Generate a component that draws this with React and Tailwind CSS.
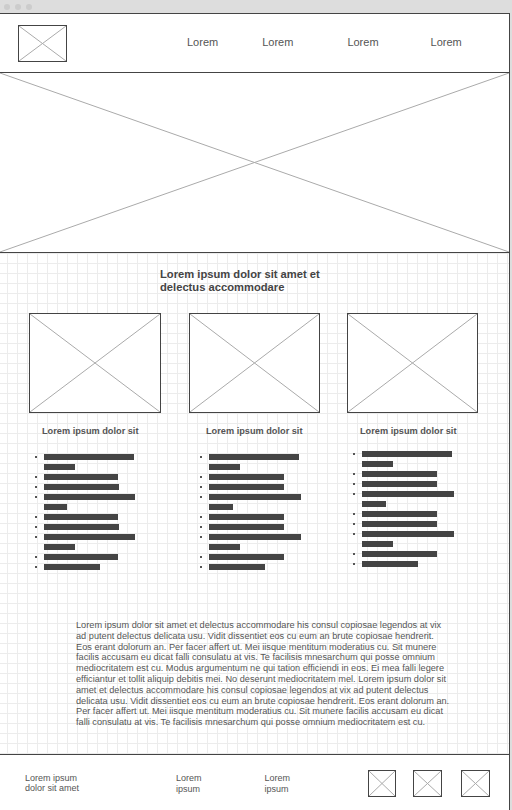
import React from 'react';

const font = { fontFamily: '"Liberation Sans", Arial, sans-serif' };

const XMark = () => (
  <svg className="block w-full h-full" viewBox="0 0 100 100" preserveAspectRatio="none">
    <line x1="0" y1="0" x2="100" y2="100" stroke="#aaaaaa" strokeWidth="1" vectorEffect="non-scaling-stroke" />
    <line x1="100" y1="0" x2="0" y2="100" stroke="#aaaaaa" strokeWidth="1" vectorEffect="non-scaling-stroke" />
  </svg>
);

const Placeholder = ({ className }) => (
  <div className={`border border-[#444444] bg-white shrink-0 ${className}`}>
    <XMark />
  </div>
);

const columns = [
  {
    width: 'w-[132px]',
    title: 'pl-[13px]',
    list: 'pl-[6px] mt-[15px]',
    items: [[90, 31], [74], [75], [91, 23], [74], [75], [91, 31], [74], [56]],
  },
  {
    width: 'w-[131px] ml-[28px]',
    title: 'pl-[17px]',
    list: 'pl-[11px] mt-[15px]',
    items: [[90, 31], [75], [75], [92, 24], [75], [75], [92, 31], [75], [56]],
  },
  {
    width: 'w-[131px] ml-[27px]',
    title: 'pl-[13px]',
    list: 'pl-[6px] mt-[12px]',
    items: [[90, 31], [75], [75], [92, 24], [75], [75], [92, 31], [75], [56]],
  },
];

const paragraph =
  'Lorem ipsum dolor sit amet et delectus accommodare his consul copiosae legendos at vix ad putent delectus delicata usu. Vidit dissentiet eos cu eum an brute copiosae hendrerit. Eos erant dolorum an. Per facer affert ut. Mei iisque mentitum moderatius cu. Sit munere facilis accusam eu dicat falli consulatu at vis. Te facilisis mnesarchum qui posse omnium mediocritatem est cu. Modus argumentum ne qui tation efficiendi in eos. Ei mea falli legere efficiantur et tollit aliquip debitis mei. No deserunt mediocritatem mel. Lorem ipsum dolor sit amet et delectus accommodare his consul copiosae legendos at vix ad putent delectus delicata usu. Vidit dissentiet eos cu eum an brute copiosae hendrerit. Eos erant dolorum an. Per facer affert ut. Mei iisque mentitum moderatius cu. Sit munere facilis accusam eu dicat falli consulatu at vis. Te facilisis mnesarchum qui posse omnium mediocritatem est cu.';

const BulletList = ({ items, className }) => (
  <div className={className}>
    {items.map((lines, i) => (
      <div key={i}>
        {lines.map((w, j) => (
          <div key={j} className="flex items-center h-[10px]">
            <span className={`w-[2px] h-[2px] mr-[7px] ${j === 0 ? 'bg-[#555555]' : 'bg-transparent'}`} />
            <span className="h-[6px] bg-[#444444]" style={{ width: w }} />
          </div>
        ))}
      </div>
    ))}
  </div>
);

export default function App() {
  return (
    <div className="w-[512px] h-[810px] overflow-hidden bg-[#dddddd]" style={font}>
      {/* window chrome */}
      <div className="h-[13px] flex items-center gap-[5px] pl-[4px]">
        <span className="w-[6px] h-[6px] rounded-full bg-[#cccccc]" />
        <span className="w-[6px] h-[6px] rounded-full bg-[#cccccc]" />
        <span className="w-[6px] h-[6px] rounded-full bg-[#cccccc]" />
      </div>

      <div className="w-[510px] bg-white border-r border-[#444444]">
        {/* Header */}
        <div className="h-[60px] border-t border-b border-[#444444] flex items-start">
          <Placeholder className="w-[49px] h-[37px] ml-[18px] mt-[11px]" />
          <nav className="flex mt-[22px] text-[11px] leading-[13px] text-[#555555]">
            <span className="ml-[120px]">Lorem</span>
            <span className="ml-[44px]">Lorem</span>
            <span className="ml-[54px]">Lorem</span>
            <span className="ml-[52px]">Lorem</span>
          </nav>
        </div>

        {/* Hero */}
        <div className="h-[180px] border-b border-[#444444]">
          <XMark />
        </div>

        {/* Content */}
        <div className="h-[501px] bg-[linear-gradient(#ececec_1px,transparent_1px),linear-gradient(90deg,#ececec_1px,transparent_1px)] bg-[size:10px_10px] bg-[position:7px_0px] pt-[15px]">
          <h1 className="pl-[160px] text-[11.2px] leading-[13px] font-bold text-[#444444]">
            Lorem ipsum dolor sit amet et
            <br />
            delectus accommodare
          </h1>

          <div className="flex pl-[29px] mt-[19px]">
            {columns.map((c, i) => (
              <div key={i} className={`${c.width} shrink-0`}>
                <Placeholder className="w-full h-[100px]" />
                <h3 className={`${c.title} mt-[12px] text-[9.2px] leading-[12px] font-bold text-[#555555] whitespace-nowrap`}>
                  Lorem ipsum dolor sit
                </h3>
                <BulletList items={c.items} className={c.list} />
              </div>
            ))}
          </div>

          <p className="ml-[76px] mt-[48px] w-[375px] text-[9.2px] leading-[10.8px] text-[#555555]">{paragraph}</p>
        </div>

        {/* Footer */}
        <div className="h-[80px] border-t border-[#444444] flex items-start text-[9px] text-[#555555]">
          <div className="ml-[25px] mt-[18px] leading-[10px] w-[80px]">
            Lorem ipsum
            <br />
            dolor sit amet
          </div>
          <div className="ml-[71px] mt-[18px] leading-[11px]">
            Lorem
            <br />
            ipsum
          </div>
          <div className="ml-[63px] mt-[18px] leading-[11px]">
            Lorem
            <br />
            ipsum
          </div>
          <div className="flex mt-[15px] ml-[78px]">
            <Placeholder className="w-[28px] h-[27px]" />
            <Placeholder className="w-[29px] h-[27px] ml-[17px]" />
            <Placeholder className="w-[29px] h-[27px] ml-[19px]" />
          </div>
        </div>
      </div>
    </div>
  );
}
